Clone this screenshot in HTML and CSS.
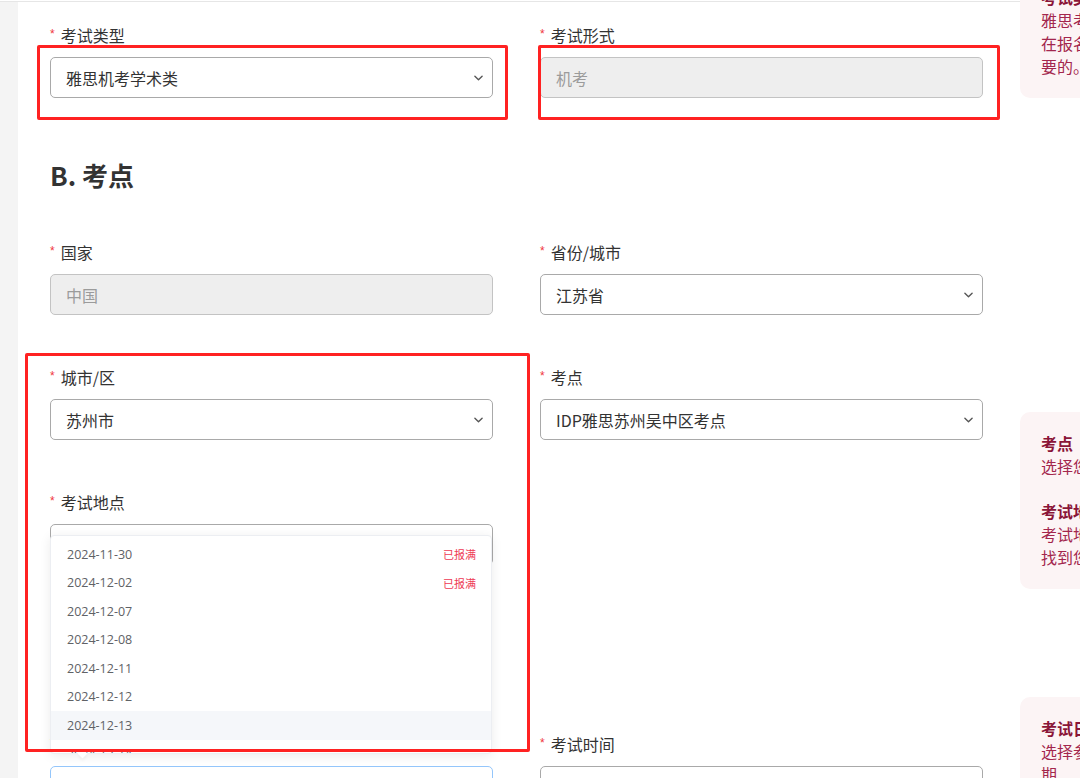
FILE: index.html
```html
<!DOCTYPE html>
<html lang="zh-CN">
<head>
<meta charset="utf-8">
<title>考点</title>
<link rel="stylesheet" href="styles.css">
</head>
<body>
<div class="page">
  <div class="gutter"></div>

  <main class="form">
    <div class="row">
      <div class="field">
        <label class="label"><span class="req">*</span>考试类型</label>
        <div class="control">
          <span class="value">雅思机考学术类</span>
          <svg class="chev" viewBox="0 0 10 6"><path d="M1 1l4 4 4-4"/></svg>
        </div>
      </div>
      <div class="field">
        <label class="label"><span class="req">*</span>考试形式</label>
        <div class="control disabled"><span class="value">机考</span></div>
      </div>
    </div>

    <h2 class="section-title">B. 考点</h2>

    <div class="row">
      <div class="field">
        <label class="label"><span class="req">*</span>国家</label>
        <div class="control disabled"><span class="value">中国</span></div>
      </div>
      <div class="field">
        <label class="label"><span class="req">*</span>省份/城市</label>
        <div class="control">
          <span class="value">江苏省</span>
          <svg class="chev" viewBox="0 0 10 6"><path d="M1 1l4 4 4-4"/></svg>
        </div>
      </div>
    </div>

    <div class="row row-gap">
      <div class="field">
        <label class="label"><span class="req">*</span>城市/区</label>
        <div class="control">
          <span class="value">苏州市</span>
          <svg class="chev" viewBox="0 0 10 6"><path d="M1 1l4 4 4-4"/></svg>
        </div>
      </div>
      <div class="field">
        <label class="label"><span class="req">*</span>考点</label>
        <div class="control">
          <span class="value">IDP雅思苏州吴中区考点</span>
          <svg class="chev" viewBox="0 0 10 6"><path d="M1 1l4 4 4-4"/></svg>
        </div>
      </div>
    </div>

    <div class="row row-gap">
      <div class="field">
        <label class="label"><span class="req">*</span>考试地点</label>
        <div class="control">
          <span class="value"></span>
          <svg class="chev" viewBox="0 0 10 6"><path d="M1 1l4 4 4-4"/></svg>
        </div>
      </div>
      <div class="field"></div>
    </div>

    <div class="row row-date">
      <div class="field">
        <label class="label"><span class="req">*</span>考试日期</label>
        <div class="control focused">
          <span class="value"></span>
          <div class="dropdown">
            <ul class="options">
              <li class="opt"><span>2024-11-30</span><span class="full">已报满</span></li>
              <li class="opt"><span>2024-12-02</span><span class="full">已报满</span></li>
              <li class="opt"><span>2024-12-07</span></li>
              <li class="opt"><span>2024-12-08</span></li>
              <li class="opt"><span>2024-12-11</span></li>
              <li class="opt"><span>2024-12-12</span></li>
              <li class="opt hover"><span>2024-12-13</span></li>
              <li class="opt"><span>2024-12-14</span></li>
              <li class="opt"><span>2024-12-15</span></li>
            </ul>
          </div>
        </div>
      </div>
      <div class="field">
        <label class="label"><span class="req">*</span>考试时间</label>
        <div class="control"><span class="value"></span></div>
      </div>
    </div>
  </main>

  <aside class="hints">
    <div class="card card-type">
      <b>考试类型</b>
      <p>雅思考试分为学术类和培训类，请确保您<br>在报名前选择正确的考试类型，这是非常重<br>要的。</p>
    </div>
    <div class="card card-venue">
      <b>考点</b>
      <p>选择您希望参加考试的考点。</p>
      <b>考试地点</b>
      <p>考试地点是指您具体参加考试的地址，您可以<br>找到您所在城市附近的考试地点。</p>
    </div>
    <div class="card card-date">
      <b>考试日期</b>
      <p>选择参加雅思考试的日<br>期</p>
    </div>
  </aside>

  <div class="mark mark-type"></div>
  <div class="mark mark-form"></div>
  <div class="mark mark-city"></div>
</div>
</body>
</html>
```

FILE: styles.css
```css
html, body {
  margin: 0;
  padding: 0;
  background: #ffffff;
  overflow: hidden;
}

body {
  font-family: "Noto Sans CJK SC", "Open Sans", sans-serif;
  color: #333333;
}

.page {
  position: relative;
  display: flex;
  align-items: flex-start;
  width: 1400px;
  min-height: 777px;
  margin-top: 1px;
  border-top: 1px solid #e6e6e6;
}

.gutter {
  flex: none;
  width: 18px;
  align-self: stretch;
  background: #f4f4f4;
}

.form {
  flex: none;
  width: 933px;
  padding: 20px 0 0 32px;
}

.row {
  display: grid;
  grid-template-columns: 443px 443px;
  column-gap: 47px;
}

.row-gap {
  margin-top: 49px;
}

.row-date {
  margin-top: 166px;
}

.label {
  display: block;
  font-size: 16px;
  line-height: 24px;
  color: #333333;
  margin-bottom: 10px;
}

.req {
  color: #f0353c;
  font-family: "Liberation Sans", sans-serif;
  font-size: 12px;
  vertical-align: 4px;
  margin-right: 6px;
}

.control {
  position: relative;
  box-sizing: border-box;
  height: 41px;
  display: flex;
  align-items: center;
  justify-content: space-between;
  padding: 0 9px 0 15px;
  border: 1px solid #a9a9a9;
  border-radius: 5px;
  background: #ffffff;
  font-size: 16px;
  color: #333333;
}

.control.disabled {
  background: #eeeeee;
  border-color: #c3c3c3;
  color: #9b9b9b;
}

.control.focused {
  border-color: #94c6fb;
}

.chev {
  width: 9px;
  height: 6px;
  fill: none;
  stroke: #555555;
  stroke-width: 1.5;
  stroke-linecap: round;
  stroke-linejoin: round;
}

.section-title {
  margin: 59px 0 46px;
  font-size: 26px;
  line-height: 36px;
  font-weight: 700;
  color: #333333;
}

/* date dropdown (popper placed above the input) */
.dropdown {
  position: absolute;
  left: -1px;
  bottom: calc(100% + 13px);
  width: 442px;
  height: 219px;
  box-sizing: border-box;
  padding-top: 4px;
  background: #ffffff;
  border: 1px solid #eceef2;
  border-radius: 4px;
  box-shadow: 0 2px 12px rgba(0, 0, 0, 0.08);
  z-index: 5;
}

.dropdown::after {
  content: "";
  position: absolute;
  left: 28px;
  bottom: -4px;
  width: 7px;
  height: 7px;
  background: #ffffff;
  transform: rotate(45deg);
  box-shadow: 2px 2px 3px rgba(0, 0, 0, 0.04);
}

.options {
  list-style: none;
  margin: 0;
  padding: 0;
  height: 100%;
  overflow: hidden;
  border-radius: 4px;
}

.opt {
  height: 28.5px;
  display: flex;
  align-items: center;
  justify-content: space-between;
  padding: 0 15px 0 16px;
  font-family: "Open Sans", "Noto Sans CJK SC", sans-serif;
  font-size: 12.5px;
  color: #606266;
}

.opt.hover {
  background: #f5f7fa;
}

.full {
  font-family: "Noto Sans CJK SC", sans-serif;
  font-size: 11px;
  color: #ee3a55;
}

/* right-hand hint cards */
.hints {
  flex: none;
  width: 330px;
  margin: -36px 0 0 37px;
  display: flex;
  flex-direction: column;
}

.card {
  background: #fcf4f5;
  border-radius: 10px;
  padding: 20px 21px;
  font-size: 16px;
  line-height: 23px;
  color: #a3264d;
  white-space: nowrap;
  overflow: hidden;
}

.card b {
  display: block;
  font-weight: 700;
  color: #8a1538;
}

.card p {
  margin: 0;
}

.card p + b {
  margin-top: 22px;
}

.card-venue {
  margin-top: 314px;
}

.card-date {
  margin-top: 108px;
}

/* red annotation frames drawn over the screenshot */
.mark {
  position: absolute;
  box-sizing: border-box;
  border: 3px solid #ff2222;
  border-radius: 2px;
  z-index: 10;
  pointer-events: none;
}

.mark-type {
  left: 37px;
  top: 43px;
  width: 471px;
  height: 75px;
}

.mark-form {
  left: 538px;
  top: 43px;
  width: 462px;
  height: 75px;
}

.mark-city {
  left: 25px;
  top: 351px;
  width: 505px;
  height: 399px;
}
```
